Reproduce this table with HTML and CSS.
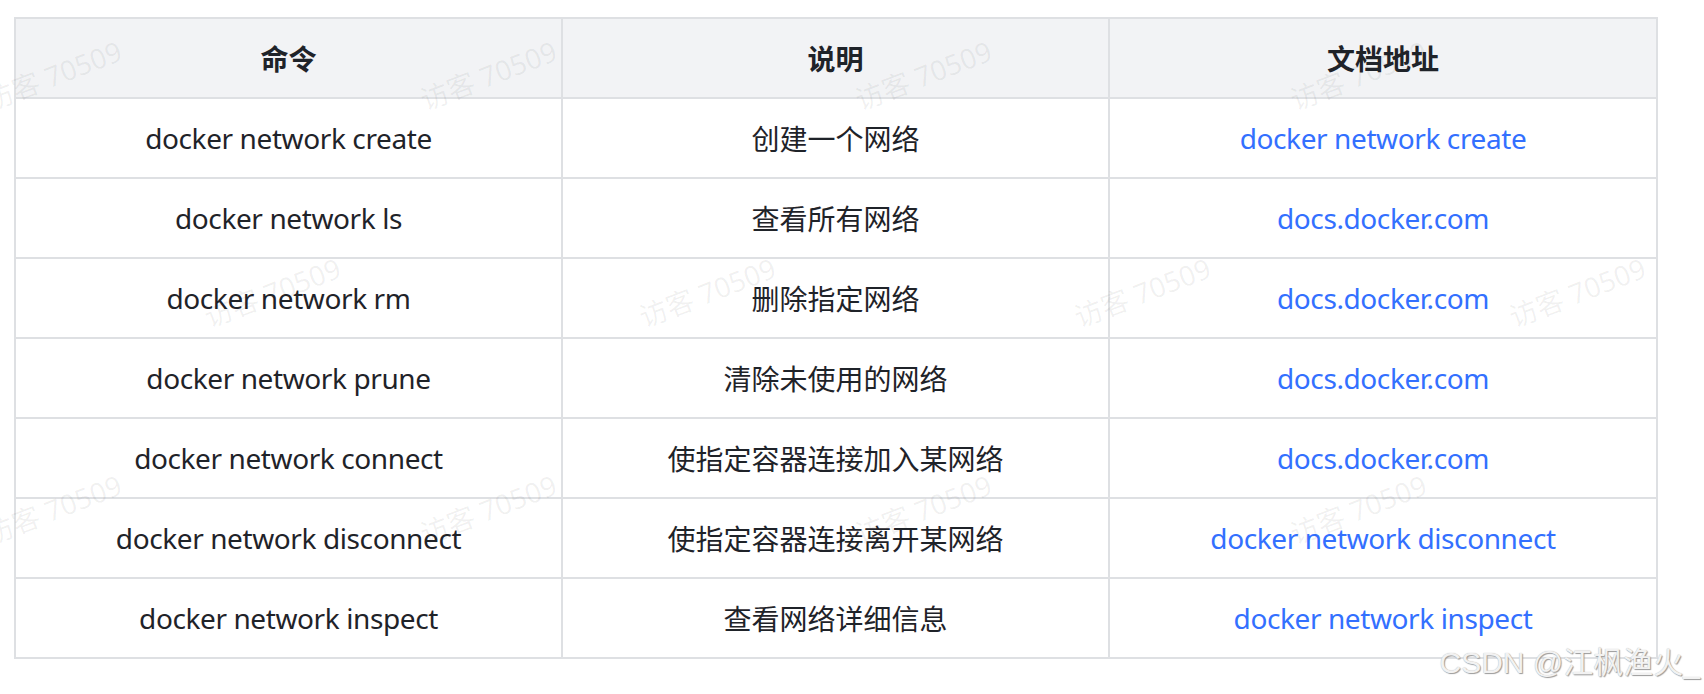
FILE: index.html
```html
<!DOCTYPE html>
<html lang="zh-CN">
<head>
<meta charset="utf-8">
<title>docker network 命令</title>
<link rel="stylesheet" href="styles.css">
</head>
<body>
<div class="page">
  <table class="cmd-table">
    <colgroup>
      <col class="c1"><col class="c2"><col class="c3">
    </colgroup>
    <thead>
      <tr><th>命令</th><th>说明</th><th>文档地址</th></tr>
    </thead>
    <tbody>
      <tr><td class="lat">docker network create</td><td>创建一个网络</td><td class="lat"><a href="#">docker network create</a></td></tr>
      <tr><td class="lat">docker network ls</td><td>查看所有网络</td><td class="lat"><a href="#">docs.docker.com</a></td></tr>
      <tr><td class="lat">docker network rm</td><td>删除指定网络</td><td class="lat"><a href="#">docs.docker.com</a></td></tr>
      <tr><td class="lat">docker network prune</td><td>清除未使用的网络</td><td class="lat"><a href="#">docs.docker.com</a></td></tr>
      <tr><td class="lat">docker network connect</td><td>使指定容器连接加入某网络</td><td class="lat"><a href="#">docs.docker.com</a></td></tr>
      <tr><td class="lat">docker network disconnect</td><td>使指定容器连接离开某网络</td><td class="lat"><a href="#">docker network disconnect</a></td></tr>
      <tr><td class="lat">docker network inspect</td><td>查看网络详细信息</td><td class="lat"><a href="#">docker network inspect</a></td></tr>
    </tbody>
  </table>

  <div class="wm-layer" aria-hidden="true">
    <span class="wm a1">访客 70509</span>
    <span class="wm a2">访客 70509</span>
    <span class="wm a3">访客 70509</span>
    <span class="wm a4">访客 70509</span>
    <span class="wm b1">访客 70509</span>
    <span class="wm b2">访客 70509</span>
    <span class="wm b3">访客 70509</span>
    <span class="wm b4">访客 70509</span>
    <span class="wm c1">访客 70509</span>
    <span class="wm c2">访客 70509</span>
    <span class="wm c3">访客 70509</span>
    <span class="wm c4">访客 70509</span>
  </div>

  <div class="csdn-mark">CSDN @江枫渔火_</div>
</div>
</body>
</html>
```

FILE: styles.css
```css
html, body {
  margin: 0;
  padding: 0;
  background: #ffffff;
}

body {
  font-family: "Noto Sans", "Noto Sans CJK SC", sans-serif;
  color: #1f2329;
}

.page {
  position: relative;
  width: 1704px;
  height: 694px;
  overflow: hidden;
  padding: 17px 0 0 14px;
  box-sizing: border-box;
}

.cmd-table {
  width: 1644px;
  table-layout: fixed;
  border-collapse: separate;
  border-spacing: 0;
  border-top: 2px solid #dee0e3;
  border-left: 2px solid #dee0e3;
}

.cmd-table col.c1 { width: 547px; }
.cmd-table col.c2 { width: 547px; }
.cmd-table col.c3 { width: 548px; }

.cmd-table th,
.cmd-table td {
  height: 78px;
  padding: 0 8px;
  border-right: 2px solid #dee0e3;
  border-bottom: 2px solid #dee0e3;
  text-align: center;
  vertical-align: middle;
  font-size: 28px;
  font-family: "Noto Sans CJK SC", "Noto Sans", sans-serif;
  font-weight: 400;
  white-space: nowrap;
}

.cmd-table th {
  background: #f2f3f5;
  font-weight: 700;
  color: #1f2329;
}

.cmd-table td.lat {
  font-family: "Noto Sans", "Noto Sans CJK SC", sans-serif;
  letter-spacing: -0.4px;
}

.cmd-table a {
  color: #3370ff;
  text-decoration: none;
}

.wm-layer {
  position: absolute;
  inset: 0;
  pointer-events: none;
}

.wm {
  position: absolute;
  transform: translate(-50%, -50%) rotate(-21deg);
  font-family: "Noto Sans", "Noto Sans CJK SC", sans-serif;
  font-size: 28px;
  color: rgba(31, 35, 41, 0.065);
  white-space: nowrap;
}

.a1 { left: 53px;   top: 74px; }
.a2 { left: 488px;  top: 74px; }
.a3 { left: 923px;  top: 74px; }
.a4 { left: 1358px; top: 74px; }
.b1 { left: 272px;  top: 291px; }
.b2 { left: 707px;  top: 291px; }
.b3 { left: 1142px; top: 291px; }
.b4 { left: 1577px; top: 291px; }
.c1 { left: 53px;   top: 508px; }
.c2 { left: 488px;  top: 508px; }
.c3 { left: 923px;  top: 508px; }
.c4 { left: 1358px; top: 508px; }

.csdn-mark {
  position: absolute;
  right: 4px;
  top: 638px;
  font-family: "Liberation Sans", "Noto Sans CJK SC", sans-serif;
  font-size: 30px;
  color: #f2f2f2;
  text-shadow: 1px 1px 1px #9a9a9a, 0 0 1px #b0b0b0;
  white-space: nowrap;
  pointer-events: none;
}
```
